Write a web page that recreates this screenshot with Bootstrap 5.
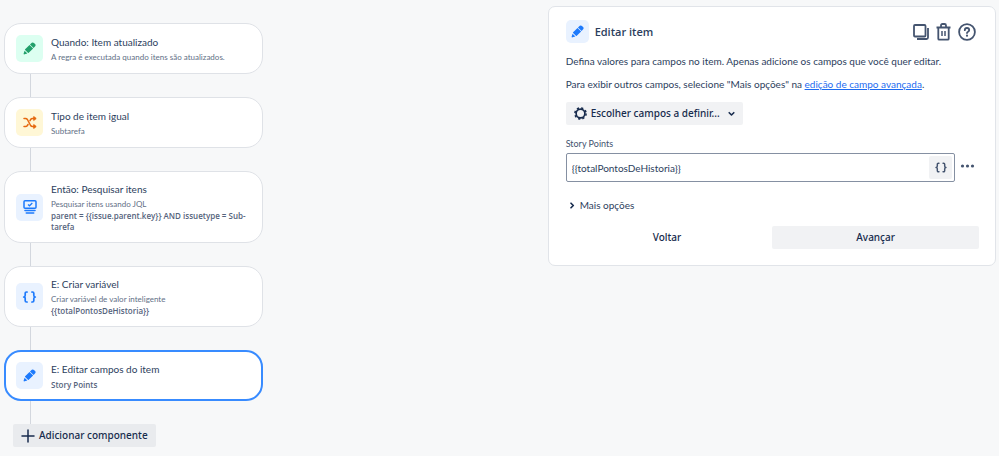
<!DOCTYPE html>
<html lang="pt-BR">
<head>
<meta charset="utf-8">
<meta name="viewport" content="width=device-width, initial-scale=1">
<title>Automação: Editar item</title>
<link href="https://cdn.jsdelivr.net/npm/bootstrap@5.3.0/dist/css/bootstrap.min.css" rel="stylesheet">
<style>
  body { background: #f7f8f9; color: #2c3e5d; font-family: Lato, "Open Sans", sans-serif; font-size: 10px; line-height: 16px; }
  svg { display: block; flex: none; }
  .page { padding: 6px 3px 0 4px; }
  .flow { width: 26%; min-width: 259px; padding-top: 17px; }
  .step { border: 1px solid #dfe2e7; border-radius: 17px; padding: 10px 11px; gap: 8px; min-height: 51px; background: #fff; }
  .step.selected { border: 2px solid #388bff; padding: 9px 10px; }
  .link-line { width: 1px; height: 23px; margin-left: 26px; background: #d3d7de; }
  .tile { width: 27px; height: 27px; border-radius: 5px; flex: none; background: #e9f2ff; color: #1d7afc; }
  .tile.compact { width: 23px; height: 23px; }
  .tile.green { background: #dcfff1; color: #22a06b; }
  .tile.yellow { background: #fff7d6; color: #e56910; }
  .step-title { font-size: 10px; line-height: 15px; font-weight: 400; margin: 0 0 2px; }
  .step-note { font-size: 8px; line-height: 11px; color: #626f86; }
  .step-note strong { display: block; font-weight: 600; color: #55637c; font-family: "Open Sans", "Noto Sans", sans-serif; }
  .flat { border: 0; border-radius: 2px; background: #f1f2f4; color: #172b4d; font-family: "Noto Sans", "Open Sans", sans-serif; font-size: 10px; font-weight: 500; line-height: 23px; padding: 0 8px; }
  .flat.add { background: #e9ebee; margin-left: 9px; }
  .flat.clear { background: transparent; }
  .plain { border: 0; background: transparent; padding: 0; color: #44546f; }
  .panel { width: 45.2%; border: 1px solid #e1e4e9; border-radius: 7px; padding: 13px 16px 16px 17px; background: #fff; }
  .panel-head { margin: 0 3px 10px 0; }
  .panel-title { font-family: "Open Sans", "Noto Sans", sans-serif; font-size: 11px; line-height: 16px; font-weight: 600; color: #2c3e5d; margin: 0 0 0 6px; }
  .panel-tools { gap: 7px; }
  .panel p { margin: 0 0 7px; }
  .panel a { color: #1d6bf0; }
  .picker { margin-top: 10px; }
  .field-label { font-size: 9px; line-height: 12px; color: #44546f; margin: 13px 0 3px; }
  .field { border: 1px solid #8590a2; border-radius: 2px; height: 29px; padding: 2px; }
  .field input { border: 0; outline: 0; font-size: 10px; color: #2c3e5d; padding: 0 3px; background: transparent; }
  .brace { width: 23px; height: 23px; border-radius: 2px; background: #f1f2f4; }
  .more { margin-top: 15px; color: #2c3e5d; gap: 5px; }
  .actions { margin-top: 13px; }
</style>
</head>
<body>
<svg width="0" height="0" class="position-absolute" aria-hidden="true">
  <symbol id="pencil" viewBox="0 0 14 14"><path fill="currentColor" d="M7.500 2.600 9.500.9q1.200-1 2.300.1l1.200 1.200q1.100 1.200.1 2.300l-1.700 2zM7 3.100l3.900 3.900-4.700 4.700q-.5.400-.9 0L2.300 8.700q-.4-.4 0-.9zM1.700 9.400l3 3-3 .9q-1.300.3-1-1z"/></symbol>
  <symbol id="braces" viewBox="0 0 14 12"><path fill="none" stroke="currentColor" stroke-width="1.700" stroke-linecap="round" stroke-linejoin="round" d="M4.600 1H4q-1.300 0-1.300 1.300v2Q2.700 6 1.200 6q1.500 0 1.500 1.700v2Q2.700 11 4 11h.6M9.400 1h.6q1.300 0 1.300 1.300v2q0 1.700 1.500 1.700-1.500 0-1.500 1.700v2Q11.300 11 10 11h-.6"/></symbol>
</svg>
<div class="page d-flex justify-content-between align-items-start">
  <main class="flow">
    <div class="step d-flex align-items-center">
      <span class="tile green d-flex align-items-center justify-content-center"><svg width="13" height="13"><use href="#pencil"/></svg></span>
      <div><h2 class="step-title">Quando: Item atualizado</h2><div class="step-note">A regra é executada quando itens são atualizados.</div></div>
    </div>
    <div class="link-line"></div>
    <div class="step d-flex align-items-center">
      <span class="tile yellow d-flex align-items-center justify-content-center"><svg width="14" height="13" viewBox="0 0 14 13" fill="none" stroke="currentColor" stroke-width="1.500" stroke-linecap="round" stroke-linejoin="round"><path d="M1 2.500h1.500q1.200 0 1.900 1l3.200 6q.7 1 1.900 1H12M1 10.500h1.500q1.200 0 1.900-1l.6-1M7 4.600l.6-1.100q.7-1 1.900-1H12"/><path fill="currentColor" stroke-width="1" d="m11 .8 2.200 1.700L11 4.200zM11 8.800l2.200 1.700L11 12.200z"/></svg></span>
      <div><h2 class="step-title">Tipo de item igual</h2><div class="step-note">Subtarefa</div></div>
    </div>
    <div class="link-line"></div>
    <div class="step d-flex align-items-center">
      <span class="tile d-flex align-items-center justify-content-center"><svg width="14" height="14" viewBox="0 0 14 14" fill="none" stroke="currentColor"><rect x="1" y=".8" width="12" height="7.400" rx="1" stroke-width="1.500"/><path stroke-width="1.300" d="m5 4.400 1.500 1.400L9.300 3"/><path stroke-width="1.600" stroke-linecap="round" d="M2 10.500h10M3.300 13h7.400"/></svg></span>
      <div><h2 class="step-title">Então: Pesquisar itens</h2><div class="step-note">Pesquisar itens usando JQL <strong>parent = {{issue.parent.key}} AND issuetype = Sub-tarefa</strong></div></div>
    </div>
    <div class="link-line"></div>
    <div class="step d-flex align-items-center">
      <span class="tile d-flex align-items-center justify-content-center"><svg width="15" height="12"><use href="#braces"/></svg></span>
      <div><h2 class="step-title">E: Criar variável</h2><div class="step-note">Criar variável de valor inteligente <strong>{{totalPontosDeHistoria}}</strong></div></div>
    </div>
    <div class="link-line"></div>
    <div class="step selected d-flex align-items-center">
      <span class="tile d-flex align-items-center justify-content-center"><svg width="13" height="13"><use href="#pencil"/></svg></span>
      <div><h2 class="step-title">E: Editar campos do item</h2><div class="step-note"><strong>Story Points</strong></div></div>
    </div>
    <div class="link-line"></div>
    <button type="button" class="flat add d-flex align-items-center gap-1"><svg width="14" height="14" viewBox="0 0 14 14" stroke="currentColor" stroke-width="1.500" stroke-linecap="round"><path d="M7 1v12M1 7h12"/></svg>Adicionar componente</button>
  </main>

  <aside class="panel">
    <header class="panel-head d-flex align-items-center">
      <span class="tile compact d-flex align-items-center justify-content-center"><svg width="13" height="13"><use href="#pencil"/></svg></span>
      <h1 class="panel-title flex-grow-1">Editar item</h1>
      <div class="panel-tools d-flex align-items-center">
        <button type="button" class="plain" aria-label="Duplicar"><svg width="16" height="16" viewBox="0 0 16 16" fill="none" stroke="currentColor" stroke-width="1.800"><rect x="1" y="1" width="11.500" height="11.500" rx="1"/><path d="M15 4v9.500q0 1.500-1.500 1.500H4"/></svg></button>
        <button type="button" class="plain" aria-label="Excluir"><svg width="15" height="18" viewBox="0 0 15 18" fill="none" stroke="currentColor" stroke-width="1.800"><path d="M.5 4.500h14M5 4V2.500Q5 1 6.500 1h2Q10 1 10 2.500V4M2.300 4.500v11.200q0 1 1 1h8.400q1 0 1-1V4.500"/><path stroke-width="1.500" d="M6 8v5M9 8v5"/></svg></button>
        <button type="button" class="plain" aria-label="Ajuda"><svg width="18" height="18" viewBox="0 0 18 18" fill="none" stroke="currentColor" stroke-width="1.800"><circle cx="9" cy="9" r="7.900"/><path stroke-linecap="round" d="M6.800 7.200Q6.800 5 9 5t2.200 2Q11.200 8 10 8.700q-1 .5-1 1.400"/><circle cx="9" cy="12.700" r="1.100" fill="currentColor" stroke="none"/></svg></button>
      </div>
    </header>
    <p>Defina valores para campos no item. Apenas adicione os campos que você quer editar.</p>
    <p>Para exibir outros campos, selecione "Mais opções" na <a href="#">edição de campo avançada</a>.</p>
    <button type="button" class="flat picker d-flex align-items-center"><svg width="13" height="13" viewBox="0 0 14 14" fill="none" stroke="currentColor"><circle cx="7" cy="7" r="4.700" stroke-width="1.800"/><circle cx="7" cy="7" r="6" stroke-width="1.700" stroke-dasharray="2.350 2.362"/></svg><span class="mx-1">Escolher campos a definir...</span><svg class="ms-1" width="7" height="6" viewBox="0 0 7 6" fill="none" stroke="currentColor" stroke-width="1.600" stroke-linecap="round" stroke-linejoin="round"><path d="m1.200 1.700 2.300 2.300 2.300-2.300"/></svg></button>
    <label class="field-label d-block" for="points">Story Points</label>
    <div class="d-flex">
      <div class="field d-flex flex-grow-1">
        <input id="points" type="text" class="flex-grow-1" value="{{totalPontosDeHistoria}}">
        <button type="button" class="plain brace d-flex align-items-center justify-content-center" aria-label="Valores inteligentes"><svg width="12" height="11"><use href="#braces"/></svg></button>
      </div>
      <button type="button" class="plain ms-1 me-1 pb-1" aria-label="Mais ações"><svg width="16" height="4" viewBox="0 0 16 4" fill="currentColor"><circle cx="3.500" cy="2" r="1.600"/><circle cx="8.500" cy="2" r="1.600"/><circle cx="13.500" cy="2" r="1.600"/></svg></button>
    </div>
    <button type="button" class="plain more d-flex align-items-center"><svg class="ms-1" width="5" height="7" viewBox="0 0 5 7" fill="none" stroke="#172b4d" stroke-width="1.600" stroke-linecap="round" stroke-linejoin="round"><path d="m1 1.200 2.300 2.300L1 5.800"/></svg>Mais opções</button>
    <div class="actions row g-0">
      <div class="col-6 pe-1"><button type="button" class="flat clear w-100">Voltar</button></div>
      <div class="col-6"><button type="button" class="flat w-100">Avançar</button></div>
    </div>
  </aside>
</div>
<script src="https://cdn.jsdelivr.net/npm/bootstrap@5.3.0/dist/js/bootstrap.bundle.min.js"></script>
</body>
</html>
